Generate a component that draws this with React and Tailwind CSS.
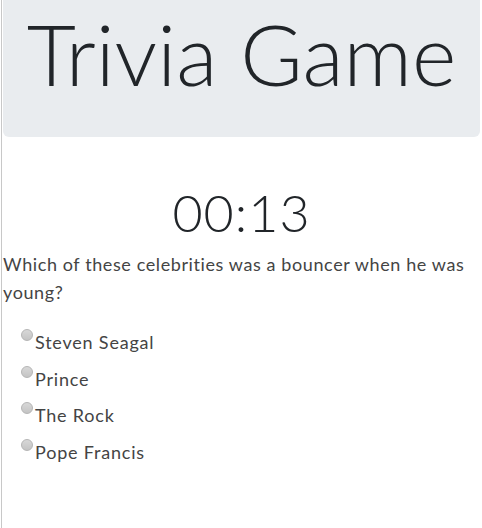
export default function App() {
  const options = ["Steven Seagal", "Prince", "The Rock", "Pope Francis"];
  return (
    <div className="w-[482px] h-[528px] bg-white overflow-hidden" style={{ fontFamily: "Lato, 'Open Sans', sans-serif", fontVariantLigatures: "none" }}>
      <div className="ml-px h-full border-l border-[#c8c8c8] pl-px pr-[2px]">
        <div className="h-[137px] bg-[#e9ecef] rounded-b-md flex items-start justify-center">
          <h1 className="mt-[5px] text-[85px] leading-[96px] font-light text-[#212529] tracking-[0px]">Trivia Game</h1>
        </div>
        <div className="mt-[45px] text-center text-[52px] leading-[60px] font-light text-[#212529] tracking-[1px]">00:13</div>
        <p className="mt-[8px] text-[18px] leading-[28px] text-[#444] tracking-[0.6px] pr-2">
          Which of these celebrities was a bouncer when he was young?
        </p>
        <div className="mt-[18px] pl-[18px] flex flex-col gap-[5.5px]">
          {options.map((o) => (
            <label key={o} className="flex items-start text-[18px] leading-[25px] text-[#444] tracking-[0.8px]">
              <span className="mt-[5px] w-[12px] h-[12px] rounded-full border border-[#b5b5b5] bg-gradient-to-b from-[#d8d8d8] to-[#c4c4c4] shrink-0"></span>
              <span className="ml-[2px] mt-[6px]">{o}</span>
            </label>
          ))}
        </div>
      </div>
    </div>
  );
}
